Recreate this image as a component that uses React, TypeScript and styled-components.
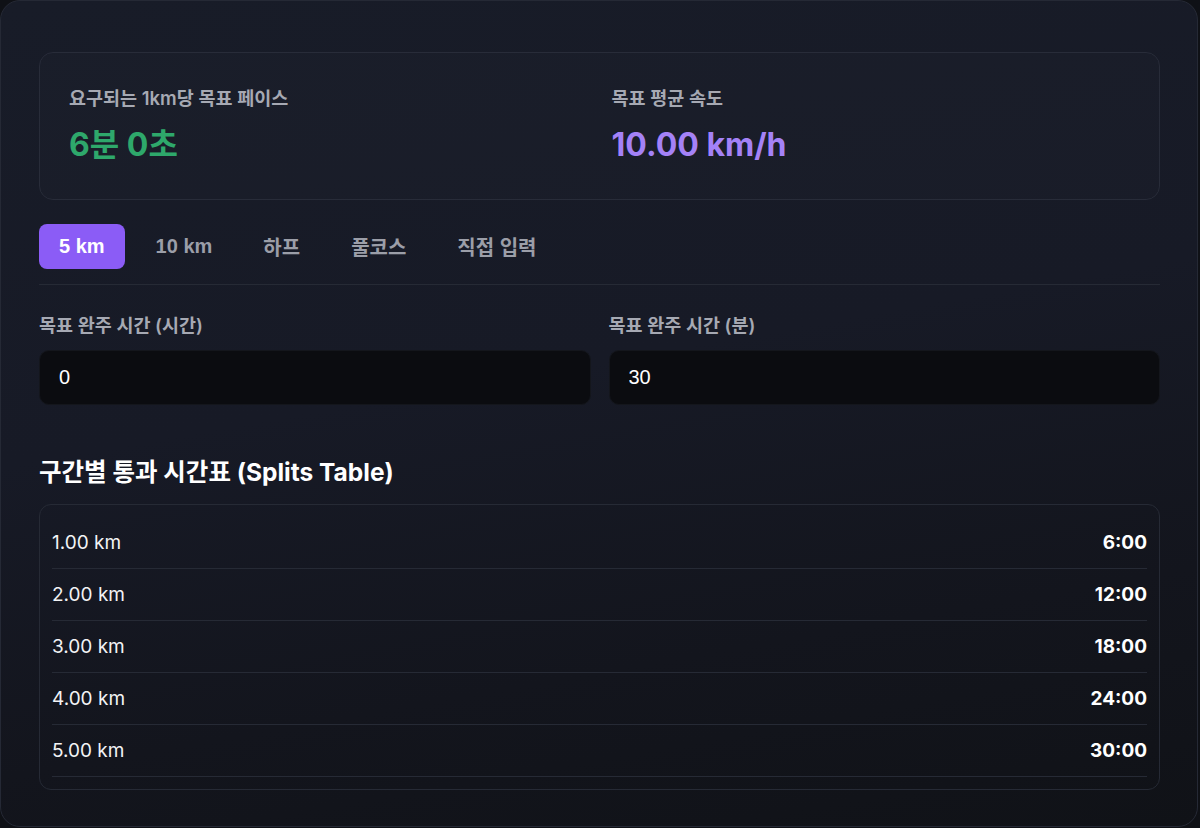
import styled, { createGlobalStyle } from "styled-components";
import { useState } from "react";

const GlobalStyle = createGlobalStyle`
  * {
    box-sizing: border-box;
  }
  html, body {
    margin: 0;
    padding: 0;
    background: #0f1116;
  }
  body {
    font-family: Inter, "Noto Sans CJK KR", "Noto Sans", sans-serif;
    -webkit-font-smoothing: antialiased;
  }
`;

// form controls keep the plain sans stack, they don't inherit the page font
const controlFont = `"Liberation Sans", Arial, "Noto Sans CJK KR", sans-serif`;

const distances = [
  { key: "5k", label: "5 km", km: 5 },
  { key: "10k", label: "10 km", km: 10 },
  { key: "half", label: "하프", km: 21.0975 },
  { key: "full", label: "풀코스", km: 42.195 },
  { key: "custom", label: "직접 입력", km: 5 },
];

function formatTime(totalSec: number) {
  const m = Math.floor(totalSec / 60);
  const s = Math.round(totalSec % 60);
  return `${m}:${String(s).padStart(2, "0")}`;
}

export default function App() {
  const [active, setActive] = useState("5k");
  const [hours, setHours] = useState("0");
  const [minutes, setMinutes] = useState("30");

  const current = distances.find((d) => d.key === active) || distances[0];
  const totalSec = (Number(hours) * 60 + Number(minutes)) * 60;
  const paceSec = totalSec / current.km;
  const speed = totalSec > 0 ? current.km / (totalSec / 3600) : 0;

  const splits: number[] = [];
  for (let k = 1; k <= Math.floor(current.km); k++) splits.push(k);

  return (
    <>
      <GlobalStyle />
      <Card>
        <Summary>
          <Stat>
            <StatLabel>요구되는 1km당 목표 페이스</StatLabel>
            <StatValue tone="green">
              {Math.floor(paceSec / 60)}분 {Math.round(paceSec % 60)}초
            </StatValue>
          </Stat>
          <Stat>
            <StatLabel>목표 평균 속도</StatLabel>
            <StatValue tone="purple">{speed.toFixed(2)} km/h</StatValue>
          </Stat>
        </Summary>

        <Tabs>
          {distances.map((d) => (
            <Tab
              key={d.key}
              $active={d.key === active}
              onClick={() => setActive(d.key)}
            >
              {d.label}
            </Tab>
          ))}
        </Tabs>

        <Fields>
          <Field>
            <FieldLabel>목표 완주 시간 (시간)</FieldLabel>
            <Input value={hours} onChange={(e) => setHours(e.target.value)} />
          </Field>
          <Field>
            <FieldLabel>목표 완주 시간 (분)</FieldLabel>
            <Input
              value={minutes}
              onChange={(e) => setMinutes(e.target.value)}
            />
          </Field>
        </Fields>

        <SectionTitle>구간별 통과 시간표 (Splits Table)</SectionTitle>
        <Table>
          {splits.map((k) => (
            <Row key={k}>
              <Distance>{k.toFixed(2)} km</Distance>
              <Time>{formatTime(paceSec * k)}</Time>
            </Row>
          ))}
        </Table>
      </Card>
    </>
  );
}

const Card = styled.div`
  width: 1198px;
  height: 827px;
  padding: 51px 37px 0 38px;
  border: 1px solid #252935;
  border-radius: 20px;
  background: linear-gradient(
    170deg,
    #181c28 0%,
    #171a26 45%,
    #13151d 75%,
    #101217 100%
  );
  overflow: hidden;
`;

const Summary = styled.div`
  display: grid;
  grid-template-columns: 1fr 1fr;
  column-gap: 24px;
  padding: 32px 29px 34px 29px;
  border: 1px solid #282c39;
  border-radius: 14px;
  background: rgba(255, 255, 255, 0.01);
`;

const Stat = styled.div`
  display: flex;
  flex-direction: column;
  gap: 14px;
`;

const StatLabel = styled.div`
  font-size: 18.5px;
  line-height: 26px;
  font-weight: 600;
  color: #a6a9b3;
`;

const StatValue = styled.div<{ tone: "green" | "purple" }>`
  font-size: 32px;
  line-height: 40px;
  font-weight: 700;
  color: ${(p) => (p.tone === "green" ? "#2ea86b" : "#a482f7")};
`;

const Tabs = styled.div`
  display: flex;
  gap: 11px;
  margin-top: 24px;
  padding-bottom: 15px;
  border-bottom: 1px solid #262a35;
`;

const Tab = styled.button<{ $active: boolean }>`
  height: 45px;
  padding: 0 20px;
  border: none;
  border-radius: 8px;
  font-family: ${controlFont};
  font-size: 20px;
  font-weight: 700;
  cursor: pointer;
  background: ${(p) => (p.$active ? "#8b5cf6" : "transparent")};
  color: ${(p) => (p.$active ? "#ffffff" : "#9b9ea8")};
`;

const Fields = styled.div`
  display: grid;
  grid-template-columns: 1fr 1fr;
  column-gap: 18px;
  margin-top: 28px;
`;

const Field = styled.div`
  display: flex;
  flex-direction: column;
  gap: 13px;
`;

const FieldLabel = styled.label`
  font-size: 18.5px;
  line-height: 24px;
  font-weight: 600;
  color: #a6a9b3;
`;

const Input = styled.input`
  height: 55px;
  padding: 0 19px;
  border: 1px solid #14161c;
  border-radius: 10px;
  background: #0b0c10;
  color: #ffffff;
  font-family: ${controlFont};
  font-size: 20px;
  outline: none;
`;

const SectionTitle = styled.h2`
  margin: 51px 0 16px 0;
  font-size: 24.5px;
  line-height: 32px;
  font-weight: 700;
  color: #ffffff;
`;

const Table = styled.div`
  display: flex;
  flex-direction: column;
  padding: 12px 12px 12px 12px;
  border: 1px solid #262a35;
  border-radius: 12px;
`;

const Row = styled.div`
  height: 52px;
  display: flex;
  align-items: center;
  justify-content: space-between;
  border-bottom: 1px solid #262a35;
`;

const Distance = styled.span`
  font-size: 19px;
  color: #f2f3f5;
`;

const Time = styled.span`
  font-size: 19px;
  font-weight: 700;
  color: #ffffff;
`;
